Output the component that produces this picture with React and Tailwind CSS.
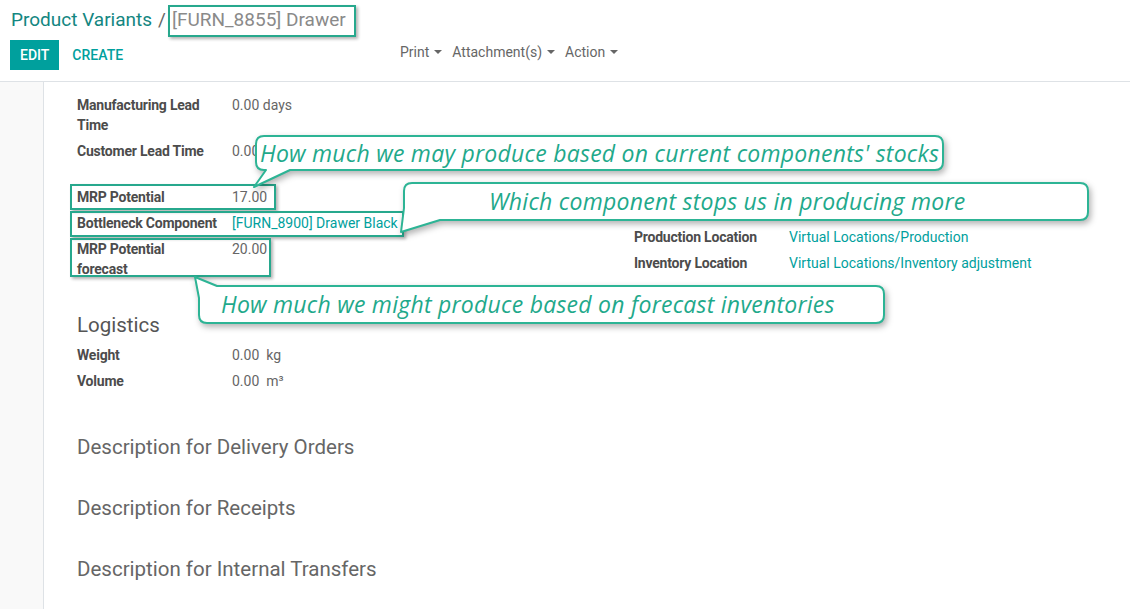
import React from 'react';

const Caret = () => (
  <span className="ml-[5px] inline-block w-0 h-0 border-x-[4px] border-x-transparent border-t-[4px] border-t-[#666] align-middle" />
);

function Row({ label, children, link }) {
  return (
    <div className="flex py-[3px] text-[14px] leading-[20px]">
      <div className="w-[155px] shrink-0 pr-[6px] tracking-[-0.22px] font-bold text-[#4c4c4c]">{label}</div>
      <div className={link ? 'text-[#00a09d]' : 'text-[#666]'}>{children}</div>
    </div>
  );
}

function Callout({ left, top, children }) {
  return (
    <div
      className="absolute whitespace-nowrap italic text-[23px] tracking-[0.25px] leading-[30px] text-[#1fa98b] font-['Open_Sans',sans-serif]"
      style={{ left, top }}
    >
      {children}
    </div>
  );
}

export default function App() {
  return (
    <div className="relative w-[1130px] h-[609px] overflow-hidden bg-white font-['Roboto',sans-serif]">
      {/* control panel */}
      <div className="h-[82px] border-b border-[#dee2e6] px-[10px] pt-[8px]">
        <div className="flex items-center h-[24px] text-[19px] leading-[24px]">
          <span className="ml-[1px] text-[#138681]">Product Variants</span>
          <span className="ml-[6px] text-[#666]">/</span>
          <span className="ml-[6px] text-[#8a8a8a]">[FURN_8855] Drawer</span>
        </div>
        <div className="mt-[8px] flex items-center h-[30px]">
          <div className="flex items-center w-[390px]">
            <button className="h-[30px] px-[10px] bg-[#00a09d] text-white text-[14px] font-medium">EDIT</button>
            <button className="ml-[3px] h-[30px] px-[10px] text-[#00a09d] text-[14px] font-medium">CREATE</button>
          </div>
          <div className="mb-[6px] flex items-center gap-[10px] text-[14px] text-[#666]">
            <span className="flex items-center">Print<Caret /></span>
            <span className="flex items-center">Attachment(s)<Caret /></span>
            <span className="flex items-center">Action<Caret /></span>
          </div>
        </div>
      </div>

      {/* body */}
      <div className="flex h-[527px]">
        <div className="w-[44px] shrink-0 bg-[#f9f9f9] border-r border-[#dee2e6]" />
        <div className="flex-1 pl-[33px] pt-[10px]">
          <div className="flex">
            <div className="w-[557px] shrink-0">
              <Row label={<>Manufacturing Lead<br />Time</>}>0.00 days</Row>
              <Row label="Customer Lead Time">0.00 days</Row>
              <div className="h-[20px]" />
              <Row label="MRP Potential">17.00</Row>
              <Row label="Bottleneck Component" link>[FURN_8900] Drawer Black</Row>
              <Row label={<>MRP Potential<br />forecast</>}>20.00</Row>
            </div>
            <div className="pt-[132px]">
              <Row label="Production Location" link>Virtual Locations/Production</Row>
              <Row label="Inventory Location" link>Virtual Locations/Inventory adjustment</Row>
            </div>
          </div>

          <div className="mt-[29px] text-[20.5px] leading-[28px] text-[#555]">Logistics</div>
          <div className="mt-[3px]">
            <Row label="Weight">0.00&nbsp;&nbsp;kg</Row>
            <Row label="Volume">0.00&nbsp;&nbsp;m³</Row>
          </div>

          <div className="mt-[39px] text-[20.5px] leading-[28px] text-[#666]">Description for Delivery Orders</div>
          <div className="mt-[33px] text-[20.5px] leading-[28px] text-[#666]">Description for Receipts</div>
          <div className="mt-[33px] text-[20.5px] leading-[28px] text-[#666]">Description for Internal Transfers</div>
        </div>
      </div>

      {/* annotation highlight boxes */}
      <div className="absolute left-[168px] top-[5px] w-[188px] h-[32px] border-2 border-[#27a88d] shadow-[2px_2px_3px_rgba(0,0,0,0.3)]" />
      <div className="absolute left-[70px] top-[184px] w-[206px] h-[26px] border-2 border-[#27a88d] shadow-[2px_2px_3px_rgba(0,0,0,0.3)]" />
      <div className="absolute left-[70px] top-[211px] w-[334px] h-[26px] border-2 border-[#27a88d] shadow-[2px_2px_3px_rgba(0,0,0,0.3)]" />
      <div className="absolute left-[70px] top-[238px] w-[201px] h-[39px] border-2 border-[#27a88d] shadow-[2px_2px_3px_rgba(0,0,0,0.3)]" />

      {/* callout bubbles */}
      <svg
        className="absolute left-0 top-0 pointer-events-none drop-shadow-[2px_3px_3px_rgba(0,0,0,0.3)]"
        width="1130"
        height="609"
      >
        <g fill="#fff" stroke="#2db495" strokeWidth="2" strokeLinejoin="round">
          <path d="M264,136 H935 Q943,136 943,144 V162 Q943,170 935,170 H290 L254,187 L266,170 H264 Q256,170 256,162 V144 Q256,136 264,136 Z" />
          <path d="M412,183 H1080 Q1088,183 1088,191 V212 Q1088,220 1080,220 H440 L401,232 L404,208 V191 Q404,183 412,183 Z" />
          <path d="M217,286 H876 Q884,286 884,294 V315 Q884,323 876,323 H207 Q199,323 199,315 V298 L195,277 L217,286 Z" />
        </g>
      </svg>
      <Callout left={260} top={138}>How much we may produce based on current components' stocks</Callout>
      <Callout left={489} top={186}>Which component stops us in producing more</Callout>
      <Callout left={221} top={289}>How much we might produce based on forecast inventories</Callout>
    </div>
  );
}
